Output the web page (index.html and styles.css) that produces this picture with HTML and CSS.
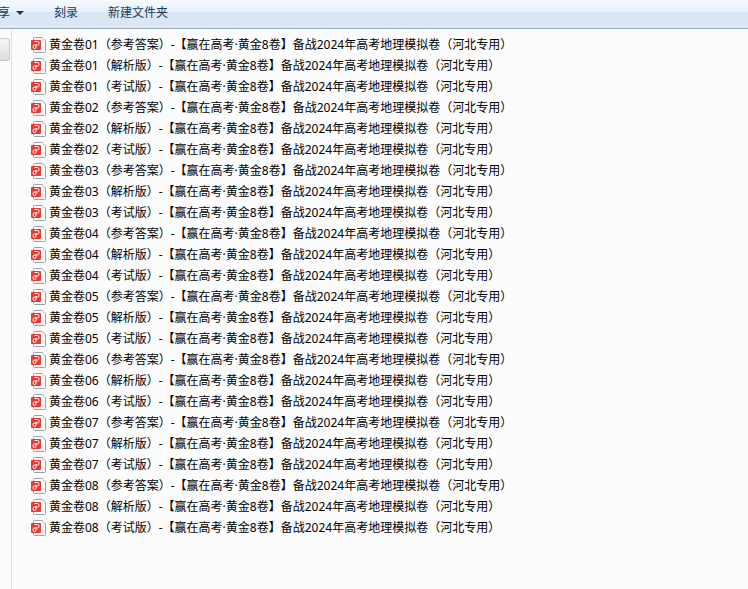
FILE: index.html
```
<!DOCTYPE html>
<html lang="zh-CN">
<head>
  <meta charset="UTF-8" />
  <meta name="viewport" content="width=device-width, initial-scale=1.0"/>
  <title>黄金卷</title>
  <link rel="stylesheet" href="styles.css">
</head>
<body>

  <svg class="sprite" aria-hidden="true">
    <symbol id="pdf" viewBox="0 0 16 16">
      <path d="M3.5 .5h8l3 3v11a1 1 0 0 1-1 1h-10a1 1 0 0 1-1-1v-13a1 1 0 0 1 1-1z" fill="#fdfdfd" stroke="#9a9fab"/>
      <path d="M11.5 .5v3h3z" fill="#dfe2e8"/>
      <rect x="0" y="3" width="10" height="10" rx="1" fill="#ea3a31"/>
      <path d="M3.500 4.500h3a1.500 1.500 0 0 1 1.500 1.500v.5a1.500 1.500 0 0 1-1.500 1.500h-3a1.500 1.500 0 0 0-1.500 1.500v.5a1.500 1.500 0 0 0 1.500 1.500 1.500 1.500 0 0 0 1.500-1.500V7" fill="none" stroke="#fff"/>
    </symbol>
  </svg>

  <header class="toolbar">
    <button type="button" class="share">享<span class="arrow"></span></button>
    <button type="button">刻录</button>
    <button type="button">新建文件夹</button>
  </header>

  <div class="content">
    <aside class="sidebar">
      <div class="thumb"></div>
    </aside>
    <main>
      <ul class="files" id="files"></ul>
    </main>
  </div>

  <script>
    const files = document.getElementById("files");
    const versions = ["参考答案", "解析版", "考试版"];

    for (let i = 1; i <= 8; i++) {
      versions.forEach(version => {
        const li = document.createElement("li");
        li.innerHTML = `
          <a href="#">
            <svg class="icon" aria-hidden="true"><use href="#pdf"/></svg>
            <span>黄金卷0${i}（${version}）-【赢在高考·黄金8卷】备战2024年高考地理模拟卷（河北专用）</span>
          </a>
        `;
        files.appendChild(li);
      });
    }
  </script>

</body>
</html>
```

FILE: styles.css
```
* {
  margin: 0;
  padding: 0;
  box-sizing: border-box;
}

html, body {
  height: 100%;
}

body {
  display: flex;
  flex-direction: column;
  font-family: "Noto Sans", "Noto Sans CJK SC", sans-serif;
  font-size: 12px;
  color: #000;
  background: #fcfcfc;
}

.sprite {
  display: none;
}

/* Toolbar */
.toolbar {
  display: flex;
  align-items: center;
  gap: 30px;
  height: 29px;
  padding-bottom: 2px;
  flex-shrink: 0;
  background: linear-gradient(#f5fafe 0, #e6f0fa 12px, #dce6f4 12px, #dbe7f4 25px, #e6eff8 27px, #c8d5e4 28px);
  border-bottom: 1px solid #a0afc3;
}

.toolbar button {
  display: flex;
  align-items: center;
  gap: 6px;
  border: none;
  background: none;
  font: inherit;
  line-height: 20px;
  color: #1e395b;
  white-space: nowrap;
}

/* the label runs off the left edge of the bar */
.toolbar .share {
  margin-left: -2px;
}

.arrow {
  border: 4px solid transparent;
  border-top-color: #1e395b;
  border-bottom: none;
}

/* Content */
.content {
  display: flex;
  flex: 1;
}

.sidebar {
  width: 12px;
  padding-top: 9px;
  flex-shrink: 0;
  border-right: 1px solid #d9e2f0;
}

.thumb {
  width: 10px;
  height: 23px;
  border: 1px solid #c9c9c9;
  border-left: none;
  border-radius: 0 3px 3px 0;
  background: linear-gradient(#f5f5f5, #dedede);
}

main {
  flex: 1;
  padding: 5px 0 0 19px;
}

.files {
  list-style: none;
}

.files a {
  display: flex;
  align-items: center;
  gap: 2px;
  height: 21px;
  line-height: 21px;
  color: #000;
  text-decoration: none;
  white-space: nowrap;
}

.icon {
  width: 16px;
  height: 16px;
  flex-shrink: 0;
}
```
